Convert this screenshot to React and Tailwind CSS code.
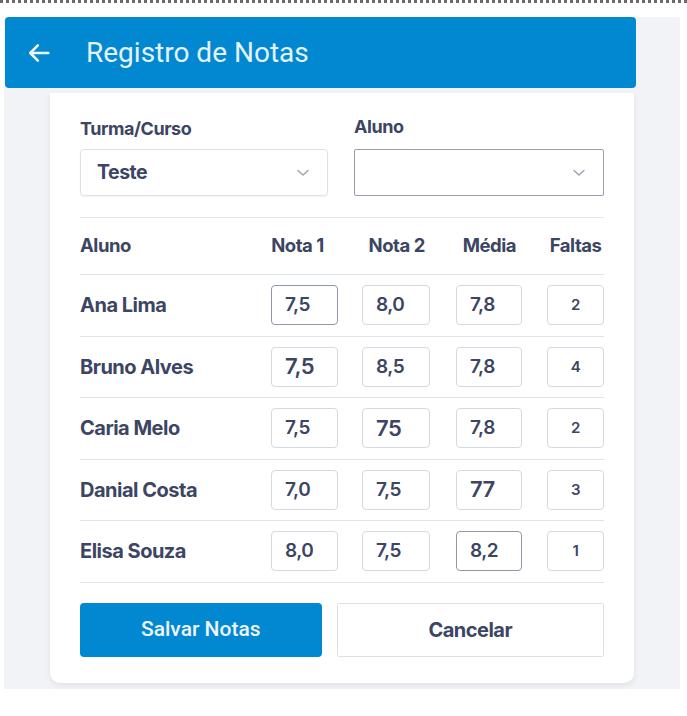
import React from "react";

const rows = [
  { name: "Ana Lima", n1: "7,5", n2: "8,0", m: "7,8", f: "2", n1d: true },
  { name: "Bruno Alves", n1: "7,5", n2: "8,5", m: "7,8", f: "4", n1big: true },
  { name: "Caria Melo", n1: "7,5", n2: "75", m: "7,8", f: "2", n2big: true },
  { name: "Danial Costa", n1: "7,0", n2: "7,5", m: "77", f: "3", mbig: true },
  { name: "Elisa Souza", n1: "8,0", n2: "7,5", m: "8,2", f: "1", md: true },
];

function Box({ value, w, dark, big, center }) {
  return (
    <div
      className={`h-[40px] ${w} rounded-[4px] border ${
        dark ? "border-[#8f98ab]" : "border-[#d5d9e2]"
      } bg-white flex items-center ${center ? "justify-center" : "pl-[13px]"} ${
        big ? "text-[22px]" : center ? "text-[15px]" : "text-[19px]"
      } font-semibold text-[#3c4563] tracking-tight`}
    >
      {value}
    </div>
  );
}

function Chevron() {
  return (
    <svg width="12" height="8" viewBox="0 0 12 8" fill="none">
      <path d="M1 1.5L6 6L11 1.5" stroke="#9aa1b0" strokeWidth="1.4" strokeLinecap="round" strokeLinejoin="round" />
    </svg>
  );
}

export default function App() {
  return (
    <div className="min-h-[716px] bg-white font-['Inter',sans-serif]">
      <div className="h-[3px] border-t-[3px] border-dotted border-[#6b6b6b]" />
      <div className="mt-[14px] ml-[4px] w-[676px] h-[672px] bg-[#f2f3f7]">
        <div className="ml-[1px] w-[631px] h-[71px] bg-[#0288d1] rounded-[4px] flex items-center">
          <svg className="ml-[20px]" width="28" height="28" viewBox="0 0 24 24" fill="none">
            <path d="M20 12H5M11 5.5L4.5 12L11 18.5" stroke="#eef6fc" strokeWidth="2.2" strokeLinecap="round" strokeLinejoin="round" />
          </svg>
          <span className="ml-[33px] text-[28px] text-[#e6f2fb] font-['Roboto',sans-serif] font-normal">
            Registro de Notas
          </span>
        </div>
        <div className="ml-[46px] mt-[5px] w-[584px] h-[590px] bg-white rounded-b-[10px] shadow-[0_2px_6px_rgba(0,0,0,0.08)] px-[30px] pt-[24px]">
          <div className="flex">
            <div className="w-[248px]">
              <div className="text-[18px] font-bold text-[#3c4563] tracking-tight leading-[24px]">Turma/Curso</div>
              <div className="mt-[8px] h-[47px] rounded-[4px] border border-[#dde1e8] shadow-[0_1px_2px_rgba(0,0,0,0.05)] flex items-center justify-between pl-[16px] pr-[18px]">
                <span className="text-[19.5px] font-bold text-[#3c4563] tracking-tight">Teste</span>
                <Chevron />
              </div>
            </div>
            <div className="ml-[26px] w-[250px]">
              <div className="text-[18px] font-bold text-[#3c4563] tracking-tight leading-[24px] -mt-[2px]">Aluno</div>
              <div className="mt-[10px] h-[47px] rounded-[2px] border border-[#98a0b0] flex items-center justify-end pr-[18px]">
                <Chevron />
              </div>
            </div>
          </div>
          <div className="mt-[21px] border-t border-[#e3e6ec]" />
          <div className="flex items-center h-[56px] text-[18.5px] font-bold text-[#3c4563] tracking-tight">
            <div className="w-[191px]">Aluno</div>
            <div className="w-[67px] text-center -ml-[6px]">Nota 1</div>
            <div className="ml-[32px] w-[68px] text-center">Nota 2</div>
            <div className="ml-[26px] w-[66px] text-center">Média</div>
            <div className="ml-[25px] w-[57px] text-center">Faltas</div>
          </div>
          {rows.map((r) => (
            <div key={r.name} className="border-t border-[#dfe3ea] h-[61.5px] flex items-center">
              <div className="w-[191px] text-[20px] font-bold text-[#3c4563] tracking-tight">{r.name}</div>
              <Box value={r.n1} w="w-[67px]" dark={r.n1d} big={r.n1big} />
              <div className="ml-[24px]"><Box value={r.n2} w="w-[68px]" big={r.n2big} /></div>
              <div className="ml-[26px]"><Box value={r.m} w="w-[66px]" dark={r.md} big={r.mbig} /></div>
              <div className="ml-[25px]"><Box value={r.f} w="w-[57px]" center /></div>
            </div>
          ))}
          <div className="border-t border-[#dfe3ea]" />
          <div className="mt-[20px] flex gap-[15px]">
            <button className="w-[242px] h-[54px] rounded-[4px] bg-[#0288d1] text-[#eef6fc] text-[21px] font-['Roboto',sans-serif] font-medium">
              Salvar Notas
            </button>
            <button className="w-[268px] h-[54px] rounded-[2px] border border-[#dde1e8] bg-white text-[#3c4563] text-[20px] font-bold tracking-tight">
              Cancelar
            </button>
          </div>
        </div>
      </div>
    </div>
  );
}
